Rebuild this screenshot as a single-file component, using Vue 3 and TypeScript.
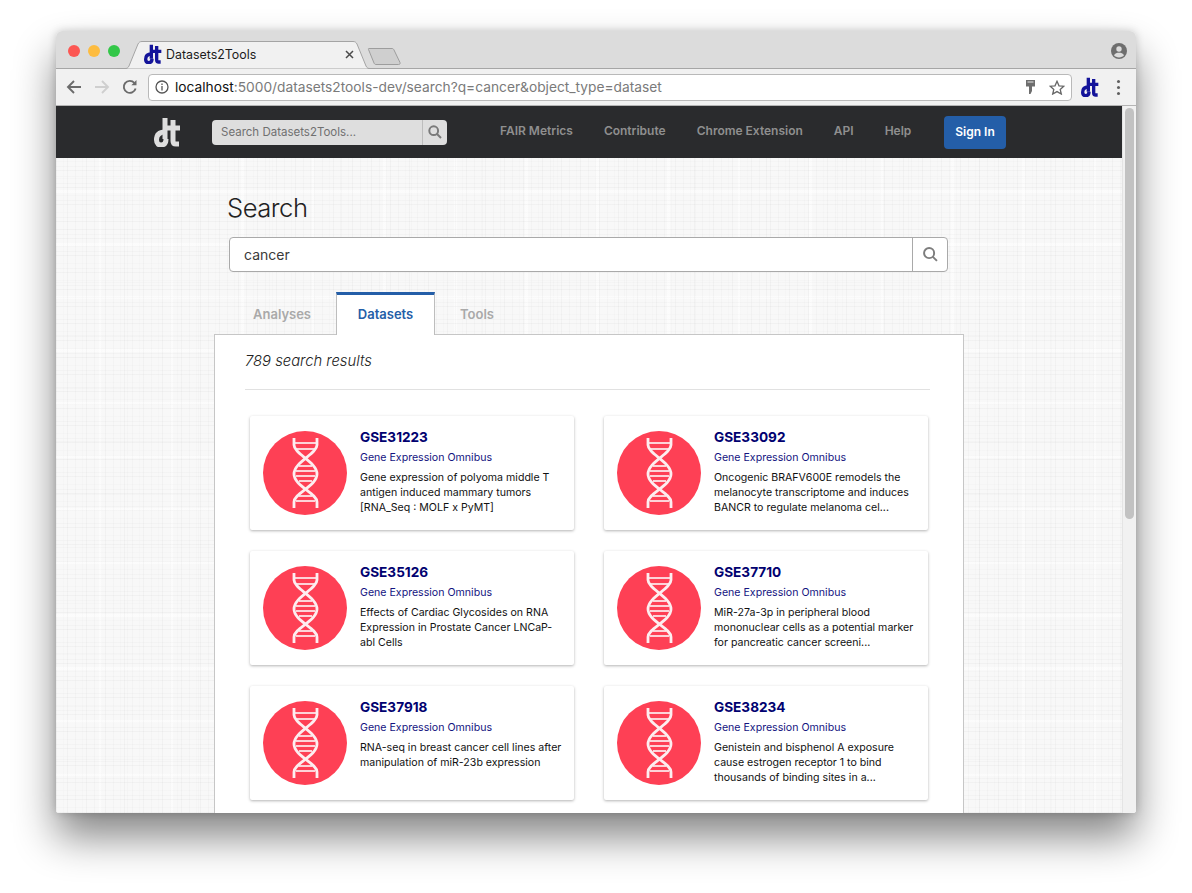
<script setup lang="ts">
interface Item { id: string; desc: string[] }
const items: Item[] = [
  { id: 'GSE31223', desc: ['Gene expression of polyoma middle T', 'antigen induced mammary tumors', '[RNA_Seq : MOLF x PyMT]'] },
  { id: 'GSE33092', desc: ['Oncogenic BRAFV600E remodels the', 'melanocyte transcriptome and induces', 'BANCR to regulate melanoma cel...'] },
  { id: 'GSE35126', desc: ['Effects of Cardiac Glycosides on RNA', 'Expression in Prostate Cancer LNCaP-', 'abl Cells'] },
  { id: 'GSE37710', desc: ['MiR-27a-3p in peripheral blood', 'mononuclear cells as a potential marker', 'for pancreatic cancer screeni...'] },
  { id: 'GSE37918', desc: ['RNA-seq in breast cancer cell lines after', 'manipulation of miR-23b expression'] },
  { id: 'GSE38234', desc: ['Genistein and bisphenol A exposure', 'cause estrogen receptor 1 to bind', 'thousands of binding sites in a...'] },
]
const links = ['FAIR Metrics', 'Contribute', 'Chrome Extension', 'API', 'Help']
const rungs = [
  [32, 53, 12], [32, 53, 18],
  [36, 49, 35], [33, 52, 40], [33, 52, 45], [36, 49, 50],
  [36, 49, 65], [33, 52, 70],
]
</script>

<template>
  <div class="window">
    <div class="tabstrip">
      <div class="lights">
        <span class="light red"></span><span class="light amber"></span><span class="light green"></span>
      </div>
      <svg class="tabshape" width="258" height="28" viewBox="0 0 258 28">
        <path d="M0 27.5H8C10 27.5 11 27 12 25L21 3C22 1.2 23 .5 25 .5H236C238 .5 239 1.2 240 3L249 25C250 27 251 27.5 253 27.5H258" fill="#f1f1f1" stroke="#a4a4a4" />
      </svg>
      <div class="tab">
        <svg class="dt" width="18" height="20" viewBox="0 0 27 30" fill="none" stroke="#14149a" stroke-width="5">
          <path d="M11 1V22" /><path d="M11 15C5 15 2.5 18 2.5 23C2.5 27 5 28 7 28C10 28 12 26 12 22" />
          <path d="M19 3V24C19 26 20 27 22 27H25" /><path d="M12 11H26" />
        </svg>
        <span class="tabtitle">Datasets2Tools</span>
        <svg class="tabclose" width="9" height="9" viewBox="0 0 9 9" stroke="#4b4b4b" stroke-width="1.5"><path d="M1 1L8 8M8 1L1 8" /></svg>
      </div>
      <svg class="newtab" width="34" height="17" viewBox="0 0 34 17"><path d="M1.5 1.5C1 .9 1.4.5 2 .5H25C26 .5 26.5 1 27 2L33 14.5C33.4 15.6 33 16.5 31.5 16.5H9C8 16.5 7.5 16 7 15Z" fill="#cfcfcf" stroke="#9d9d9d" /></svg>
      <svg class="profile" width="16" height="16" viewBox="0 0 16 16"><circle cx="8" cy="8" r="8" fill="#6e6e6e" /><circle cx="8" cy="6" r="2.7" fill="#dcdcdc" /><path d="M3 12.2C4 10.2 6 9.7 8 9.7S12 10.2 13 12.2C12 13.6 10 14.4 8 14.4S4 13.6 3 12.2Z" fill="#dcdcdc" /></svg>
    </div>

    <div class="toolbar">
      <svg class="tool" width="16" height="16" viewBox="0 0 16 16" fill="none" stroke="#6b6b6b" stroke-width="1.9"><path d="M15 8H2M8 2L2 8L8 14" /></svg>
      <svg class="tool" width="16" height="16" viewBox="0 0 16 16" fill="none" stroke="#cfcfcf" stroke-width="1.9"><path d="M1 8H14M8 2L14 8L8 14" /></svg>
      <svg class="tool" width="16" height="16" viewBox="0 0 16 16" fill="none" stroke="#6b6b6b" stroke-width="1.9"><path d="M13.6 9.5A6 6 0 1 1 12.4 4" /><path d="M14.5 1V6.2H9.3" fill="#6b6b6b" stroke="none" /></svg>
      <div class="omnibox">
        <svg width="14" height="14" viewBox="0 0 14 14" fill="none" stroke="#555" stroke-width="1.3"><circle cx="7" cy="7" r="6" /><path d="M7 6V10.5M7 3.4V5" /></svg>
        <span class="url"><b>localhost</b>:5000/datasets2tools-dev/search?q=cancer&amp;object_type=dataset</span>
        <span class="grow"></span>
        <svg class="key" width="9" height="15" viewBox="0 0 9 15"><path d="M0 0H9V6.5H6V11L4.5 14H3V6.5H0Z" fill="#6e6e6e" /><path d="M1.5 2H7.5" stroke="#e5e5e5" /></svg>
        <svg class="star" width="16" height="15" viewBox="0 0 16 15" fill="none" stroke="#666" stroke-width="1.3"><path d="M8 1.3L10 5.8L14.8 6.2L11.2 9.4L12.3 14L8 11.6L3.7 14L4.8 9.4L1.2 6.2L6 5.8Z" /></svg>
      </div>
      <svg class="extlogo" width="18" height="20" viewBox="0 0 27 30" fill="none" stroke="#14149a" stroke-width="5">
        <path d="M11 1V22" /><path d="M11 15C5 15 2.5 18 2.5 23C2.5 27 5 28 7 28C10 28 12 26 12 22" />
        <path d="M19 3V24C19 26 20 27 22 27H25" /><path d="M12 11H26" />
      </svg>
      <div class="dots"><i></i><i></i><i></i></div>
    </div>

    <div class="viewport">
      <div class="page">
        <nav class="navbar">
          <svg class="brand" width="27" height="30" viewBox="0 0 27 30" fill="none" stroke="#dedede" stroke-width="5">
            <path d="M11 1V22" /><path d="M11 15C5 15 2.5 18 2.5 23C2.5 27 5 28 7 28C10 28 12 26 12 22" />
            <path d="M19 3V24C19 26 20 27 22 27H25" /><path d="M12 11H26" />
          </svg>
          <div class="navsearch">
            <span class="navph">Search Datasets2Tools...</span>
            <span class="navbtn">
              <svg width="14" height="14" viewBox="0 0 14 14" fill="none" stroke="#7a7a7a" stroke-width="2"><circle cx="5.7" cy="5.7" r="4.4" /><path d="M9 9L13 13" /></svg>
            </span>
          </div>
          <div class="links">
            <a v-for="l in links" :key="l" class="link">{{ l }}</a>
          </div>
          <a class="signin">Sign In</a>
        </nav>

        <main class="container">
          <h1 class="heading">Search</h1>
          <div class="searchbar">
            <span class="query">cancer</span>
            <span class="searchbtn">
              <svg width="15" height="15" viewBox="0 0 14 14" fill="none" stroke="#7d7d7d" stroke-width="1.8"><circle cx="5.7" cy="5.7" r="4.7" /><path d="M9 9L13 13" /></svg>
            </span>
          </div>
          <div class="tabs">
            <span class="navtab first">Analyses</span>
            <span class="navtab active">Datasets</span>
            <span class="navtab">Tools</span>
          </div>
          <section class="panel">
            <p class="count">789 search results</p>
            <hr class="rule" />
            <div class="grid">
              <article v-for="it in items" :key="it.id" class="card">
                <svg class="dna" width="84" height="84" viewBox="0 0 84 84" fill="none">
                  <circle cx="42" cy="42" r="42" fill="#fe4055" />
                  <g stroke="#fdeef0" stroke-width="1.7">
                    <path v-for="(r, i) in rungs" :key="i" :d="`M${r[0]} ${r[2]}H${r[1]}`" />
                  </g>
                  <g stroke="#fdeef0" stroke-width="2.8">
                    <path d="M31 7V14C31 23 54 31 54 43C54 55 31 62 31 71V77" />
                    <path d="M54 7V14C54 23 31 31 31 43C31 55 54 62 54 71V77" />
                  </g>
                </svg>
                <div class="info">
                  <h3 class="title">{{ it.id }}</h3>
                  <div class="source">Gene Expression Omnibus</div>
                  <div class="desc"><div v-for="line in it.desc" :key="line">{{ line }}</div></div>
                </div>
              </article>
            </div>
          </section>
        </main>
      </div>
      <div class="scrollbar"><div class="thumb"></div></div>
    </div>
  </div>
</template>

<style>
html, body { margin: 0; background: #fff; height: 893px; overflow: hidden; }
</style>

<style scoped>
.window {
  width: 1080px;
  height: 782px;
  margin: 31px 0 0 56px;
  display: flex;
  flex-direction: column;
  border-radius: 6px 6px 3px 3px;
  overflow: hidden;
  box-shadow: 0 24px 42px rgba(0, 0, 0, 0.48), 0 0 8px rgba(0, 0, 0, 0.18);
  font-family: Inter, "Liberation Sans", sans-serif;
  position: relative;
}
.tabstrip {
  height: 37px;
  flex: none;
  background: #dcdcdc;
  border-bottom: 1px solid #a6a6a6;
  display: flex;
  align-items: center;
  position: relative;
  box-sizing: content-box;
}
.lights { display: flex; gap: 8px; margin-left: 12px; margin-top: 3px; }
.light { width: 12px; height: 12px; border-radius: 50%; }
.red { background: #fc5753; }
.amber { background: #fdbc40; }
.green { background: #33c748; }
.tabshape { position: absolute; left: 61px; top: 10px; }
.tab {
  position: absolute;
  left: 88px;
  top: 13px;
  width: 212px;
  display: flex;
  align-items: center;
}
.tabtitle { margin-left: 4px; font-size: 12.4px; color: #1c1c1c; font-family: Inter, sans-serif; }
.tabclose { position: absolute; left: 201px; top: 6px; }
.newtab { position: absolute; left: 311px; top: 17px; }
.profile { position: absolute; right: 9px; top: 12px; }
.toolbar {
  height: 36px;
  flex: none;
  background: #f1f1f1;
  border-bottom: 1px solid #b4b4b4;
  display: flex;
  align-items: center;
  padding: 0 0 0 10px;
  gap: 12px;
}
.tool { flex: none; }
.omnibox {
  width: 924px;
  height: 27px;
  margin-left: -2px;
  box-sizing: border-box;
  background: #fff;
  border: 1px solid #b9b9b9;
  border-radius: 4px;
  display: flex;
  align-items: center;
  padding: 0 6px 0 6px;
}
.url { margin-left: 6px; font-size: 13.75px; color: #7a7a7a; white-space: nowrap; }
.url b { font-weight: 400; color: #111; }
.grow { flex: 1; }
.key { margin-right: 14px; }
.extlogo { margin-left: -3px; flex: none; }
.dots { display: flex; flex-direction: column; gap: 3px; margin-left: 6px; }
.dots i { width: 3px; height: 3px; border-radius: 50%; background: #5f5f5f; display: block; }
.viewport { flex: 1; display: flex; min-height: 0; }
.page {
  width: 1066px;
  overflow: hidden;
  background-color: #f8f8f8;
  background-image:
    repeating-linear-gradient(0deg, rgba(0, 0, 0, 0.018) 0 1px, transparent 1px 5px, rgba(0, 0, 0, 0.01) 5px 6px, transparent 6px 13px, rgba(0, 0, 0, 0.026) 13px 14px, transparent 14px 17px),
    repeating-linear-gradient(90deg, rgba(0, 0, 0, 0.018) 0 1px, transparent 1px 7px, rgba(0, 0, 0, 0.01) 7px 8px, transparent 8px 11px, rgba(0, 0, 0, 0.026) 11px 12px, transparent 12px 19px),
    repeating-linear-gradient(0deg, rgba(0, 0, 0, 0.014) 0 1px, transparent 1px 37px, rgba(255, 255, 255, 0.5) 37px 40px, transparent 40px 53px),
    repeating-linear-gradient(90deg, rgba(0, 0, 0, 0.016) 0 1px, transparent 1px 43px, rgba(255, 255, 255, 0.5) 43px 46px, transparent 46px 71px);
}
.navbar {
  height: 52px;
  background: #2a2b2d;
  display: flex;
  align-items: center;
  padding-left: 98px;
}
.brand { flex: none; }
.navsearch {
  margin-left: 31px;
  width: 235px;
  height: 25px;
  background: #dedede;
  border-radius: 4px;
  display: flex;
  align-items: center;
}
.navph { flex: 1; padding-left: 9px; font-size: 11.5px; color: #707070; }
.navbtn {
  width: 25px;
  height: 25px;
  border-left: 1px solid #bdbdbd;
  display: flex;
  align-items: center;
  justify-content: center;
  box-sizing: border-box;
}
.links { display: flex; margin-left: 53px; width: 444px; margin-top: -3px; }
.link { font-size: 12px; font-weight: 600; color: #8f8f8f; white-space: nowrap; margin-right: 31px; }
.signin {
  width: 62px;
  height: 33px;
  background: #245ea8;
  border-radius: 4px;
  color: #fff;
  font-size: 12px;
  font-weight: 600;
  display: flex;
  align-items: center;
  justify-content: center;
  padding-bottom: 2px;
  box-sizing: border-box;
}
.container { width: 750px; margin: 0 auto; }
.heading {
  margin: 0;
  padding: 34px 0 0 13px;
  font-size: 25.6px;
  line-height: 31px;
  font-weight: 300;
  letter-spacing: -0.5px;
  color: #222;
}
.searchbar {
  margin: 14px 16px 0 15px;
  height: 35px;
  box-sizing: border-box;
  background: #fff;
  border: 1px solid #a9a9a9;
  border-radius: 4px;
  display: flex;
  align-items: center;
}
.query { flex: 1; padding-left: 14px; font-size: 14px; color: #3a3a3a; }
.searchbtn {
  width: 34px;
  height: 33px;
  border-left: 1px solid #a9a9a9;
  display: flex;
  align-items: center;
  justify-content: center;
}
.tabs { display: flex; margin-top: 20px; height: 43px; padding-left: 14px; margin-bottom: -1px; position: relative; z-index: 1; }
.navtab {
  font-size: 13px;
  font-weight: 600;
  color: #a9a9a9;
  padding: 0 25px;
  line-height: 45px;
  box-sizing: border-box;
}
.navtab.first { width: 108px; }
.navtab.active {
  width: 99px;
  padding: 0;
  text-align: center;
  color: #245ea8;
  background: #fff;
  border: 1px solid #bdbdbd;
  border-top: 3px solid #245ea8;
  border-bottom: 0;
  line-height: 39px;
}
.panel {
  background: #fff;
  border: 1px solid #c6c6c6;
  padding: 0 33px 0 30px;
  height: 520px;
  box-sizing: border-box;
}
.count { margin: 0; padding-top: 17px; font-size: 14.8px; line-height: 18px; font-style: italic; font-weight: 300; color: #222; }
.rule { margin: 19px 0 0; border: 0; border-top: 1px solid #e1e1e1; }
.grid {
  display: grid;
  grid-template-columns: 324px 324px;
  column-gap: 30px;
  row-gap: 21px;
  margin: 26px 0 0 5px;
}
.card {
  height: 114px;
  box-sizing: border-box;
  background: #fff;
  border-radius: 2px;
  box-shadow: 0 1px 3px rgba(0, 0, 0, 0.3);
  display: flex;
  padding: 15px 0 0 13px;
}
.dna { flex: none; }
.info { margin-left: 13px; margin-top: -4px; min-width: 0; }
.title { margin: 0; font-size: 13.6px; line-height: 20px; font-weight: 700; color: #010170; white-space: nowrap; }
.source { margin-top: 2px; font-size: 10.6px; line-height: 18px; color: #14147f; }
.desc { margin-top: 3px; font-size: 10.6px; line-height: 15px; color: #111; white-space: nowrap; }
.scrollbar { width: 14px; background: #f1f1f1; border-left: 1px solid #e4e4e4; box-sizing: border-box; padding: 2px 2px 0 2px; }
.thumb { height: 411px; border-radius: 5px; background: #c2c2c2; }
</style>
